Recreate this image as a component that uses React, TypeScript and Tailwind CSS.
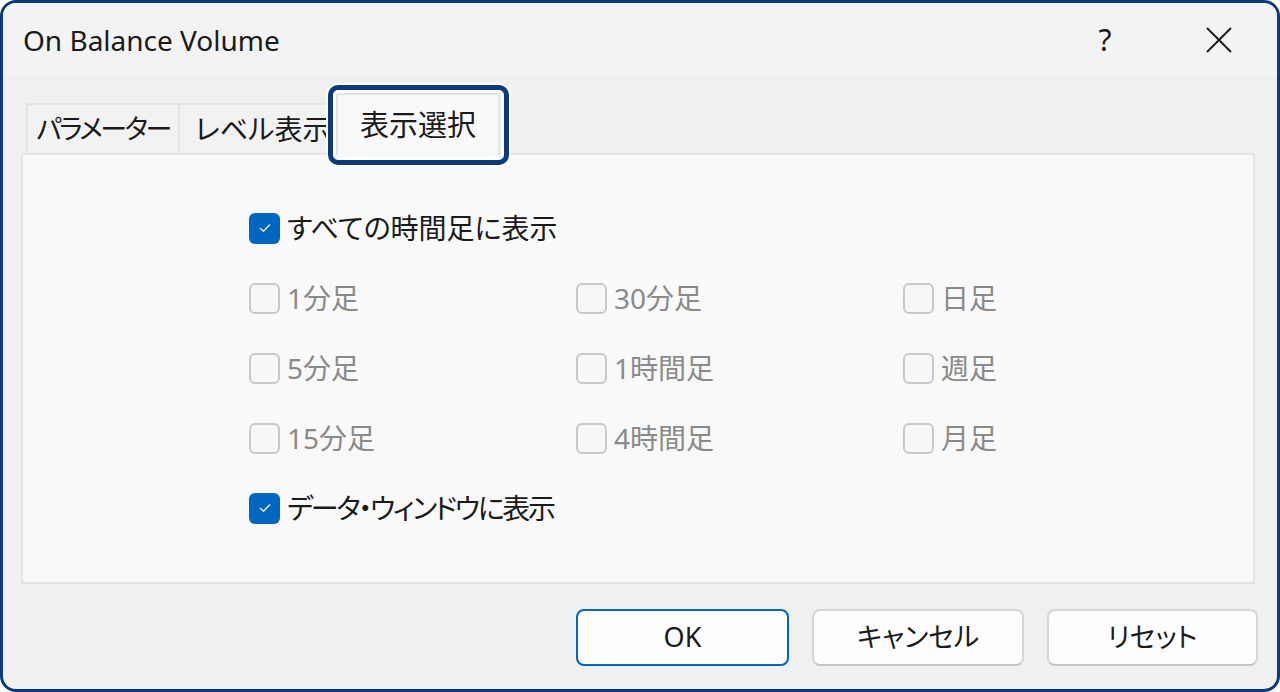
const jp = "font-['Noto_Sans','Noto_Sans_CJK_JP',sans-serif] [font-feature-settings:'palt']";

function CheckMark() {
  return (
    <svg width="14" height="14" viewBox="0 0 14 14" fill="none">
      <path d="M2.5 7.5 L5.5 10.3 L11.5 4" stroke="#e4ecf6" strokeWidth="1.5" strokeLinecap="round" strokeLinejoin="round" />
    </svg>
  );
}

function Check({ label, checked, tight }: { label: string; checked?: boolean; tight?: boolean }) {
  return (
    <div className="flex h-[70px] items-center gap-[7px]">
      {checked ? (
        <div className="flex h-[31px] w-[31px] items-center justify-center rounded-[6px] bg-[#0067c0]">
          <CheckMark />
        </div>
      ) : (
        <div className="h-[31px] w-[31px] rounded-[6px] border-2 border-[#c9c9c9] bg-[#f7f7f7]" />
      )}
      <span
        className={`text-[28px] leading-none whitespace-nowrap ${tight ? "tracking-[-2.3px]" : ""} ${
          checked ? "text-[#1a1a1a]" : "text-[#8a8a8a]"
        }`}
      >
        {label}
      </span>
    </div>
  );
}

function Button({ label, primary, width }: { label: string; primary?: boolean; width: string }) {
  return (
    <button
      className={`flex h-[57px] ${width} items-center justify-center rounded-[8px] bg-[#fdfdfd] text-[27px] text-[#1a1a1a] ${
        primary ? "border-2 border-[#0067c0]" : "border-2 border-[#d6d6d6] border-b-[#c4c4c4]"
      }`}
    >
      {label}
    </button>
  );
}

export default function App() {
  const grid = [
    ["1分足", "30分足", "日足"],
    ["5分足", "1時間足", "週足"],
    ["15分足", "4時間足", "月足"],
  ];

  return (
    <div className={`min-h-screen bg-white ${jp}`}>
      <div className="flex h-[692px] w-[1280px] flex-col overflow-hidden rounded-[16px] border-[3px] border-[#0c3a7c] bg-[#f0f0f0]">
        {/* title bar */}
        <div className="flex h-[73px] items-center bg-[#f3f3f3] pl-[20px] pr-[28px]">
          <span className="flex-1 text-[28px] text-[#1a1a1a] [font-feature-settings:normal]">On Balance Volume</span>
          <span className="flex w-[60px] justify-center text-[30px] text-[#1a1a1a]">?</span>
          <span className="ml-[54px] flex w-[60px] justify-center">
            <svg width="28" height="28" viewBox="0 0 28 28">
              <path d="M2 2 L26 26 M26 2 L2 26" stroke="#1a1a1a" strokeWidth="2" />
            </svg>
          </span>
        </div>

        {/* tabs */}
        <div className="ml-[23px] flex h-[77px] items-end">
          <div className="flex h-[50px] w-[154px] items-center justify-center border-2 border-b-0 border-[#e4e4e4] bg-[#f2f2f2] text-[27px] tracking-[-2.5px] text-[#1a1a1a] whitespace-nowrap">
            パラメーター
          </div>
          <div className="flex h-[50px] w-[160px] items-center border-y-2 border-b-0 border-[#e4e4e4] bg-[#f2f2f2] pl-[15px] text-[28px] text-[#1a1a1a] whitespace-nowrap">
            レベル表示
          </div>
          <div className="relative z-10 -mb-[2px] -ml-[4px] flex h-[62px] w-[164px] items-center justify-center border-2 border-b-0 border-[#e4e4e4] bg-[#f9f9f9] text-[29px] text-[#1a1a1a]">
            表示選択
            <div className="absolute -left-[10px] -right-[11px] -top-[10px] -bottom-[10px] rounded-[10px] border-[5px] border-[#0c3a7c] shadow-[0_0_0_2px_#ffffff,inset_0_0_0_3px_#ffffff]" />
          </div>
        </div>

        {/* panel */}
        <div className="ml-[18px] h-[431px] w-[1234px] border-2 border-[#e4e4e4] bg-[#f9f9f9] pl-[226px] pt-[38px]">
          <Check label="すべての時間足に表示" checked />
          <div className="grid grid-cols-[327px_327px_327px]">
            {grid.flat().map((t) => (
              <Check key={t} label={t} />
            ))}
          </div>
          <Check label="データ・ウィンドウに表示" checked tight />
        </div>

        {/* buttons */}
        <div className="mt-[25px] flex justify-end gap-[23px] pr-[19px]">
          <Button label="OK" primary width="w-[213px]" />
          <Button label="キャンセル" width="w-[212px]" />
          <Button label="リセット" width="w-[211px]" />
        </div>
      </div>
    </div>
  );
}
